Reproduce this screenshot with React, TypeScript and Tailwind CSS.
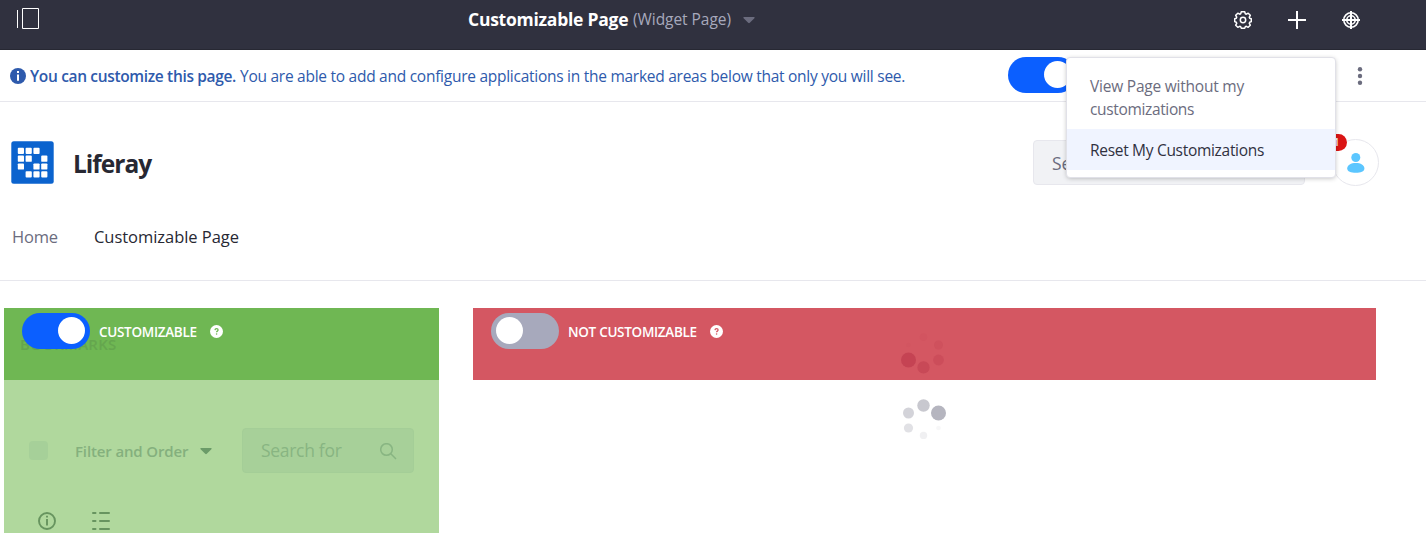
import React from 'react';

function Toggle({ on }: { on: boolean }) {
  return (
    <button
      role="switch"
      aria-checked={on}
      className={
        on
          ? 'flex h-9 w-[68px] shrink-0 items-start justify-end rounded-full bg-[#0b5fff] pt-1 pr-[5px]'
          : 'flex h-9 w-[68px] shrink-0 items-start justify-start rounded-full bg-[#a7a9bc] pt-1 pl-[5px]'
      }
    >
      <span className="size-[27px] rounded-full bg-white" />
    </button>
  );
}

function Help({ color }: { color: string }) {
  return (
    <svg width="13" height="13" viewBox="0 0 13 13" className="shrink-0">
      <circle cx="6.5" cy="6.5" r="6.5" fill="#fff" />
      <path d="M5 5.1c.1-1.9 3.1-1.9 3.1 0 0 1.1-1.5 1-1.5 2.2" fill="none" stroke={color} strokeWidth="1.3" />
      <circle cx="6.6" cy="9" r=".8" fill={color} />
    </svg>
  );
}

function Logo() {
  const cells = [[0, 0], [1, 0], [2, 0], [0, 1], [1, 1], [3, 1], [0, 2], [2, 2], [3, 2], [1, 3], [2, 3], [3, 3]];
  return (
    <svg width="43" height="43" viewBox="0 0 43 43" className="shrink-0">
      <rect x=".3" y=".3" width="42.4" height="42.4" rx="2.5" fill="#0b63ce" />
      {cells.map(([x, y]) => (
        <rect key={`${x}-${y}`} x={6.8 + x * 7.8} y={6.8 + y * 7.8} width="6.2" height="6.2" rx=".9" fill="#fff" />
      ))}
    </svg>
  );
}

function Gear() {
  return (
    <svg width="18" height="18" viewBox="0 0 18 18" fill="none" stroke="#fff">
      <path
        strokeWidth="1.5"
        strokeLinejoin="round"
        d="M7.3.8h3.4l.6 2 1 .4 1.9-1 2.1 2.1-1 1.9.4 1 1.6.6v2.8l-1.6.7-.4 1 1 1.9-2.1 2.1-1.9-1-1 .4-.6 1.5H7.3l-.6-1.5-1-.4-1.9 1-2.1-2.1 1-1.9-.4-1-1.6-.7V7.8l1.6-.6.4-1-1-1.9 2.1-2.1 1.9 1 1-.4z"
      />
      <circle cx="9" cy="9" r="2.7" strokeWidth="1.5" />
    </svg>
  );
}

function Target() {
  return (
    <svg width="18" height="18" viewBox="0 0 18 18" fill="none" stroke="#fff">
      <circle cx="9" cy="9" r="7.2" strokeWidth="1.6" />
      <circle cx="9" cy="9" r="4.2" strokeWidth="1.6" />
      <path d="M9 0v18M0 9h18" strokeWidth="2" />
    </svg>
  );
}

function Caret({ className }: { className: string }) {
  return (
    <svg width="12" height="8" viewBox="0 0 12 8" className={className} fill="currentColor">
      <path d="M1.2 1h9.6c.8 0 1.1.7.6 1.2L6.8 6.8c-.5.5-1.1.5-1.6 0L.6 2.2C.1 1.7.4 1 1.2 1z" />
    </svg>
  );
}

const redDots = [
  [22.3, 7.3, 3.7, 0.1], [37.3, 15, 4.5, 0.25], [37.3, 30, 5.4, 0.4],
  [22.3, 37.4, 6.1, 0.6], [7.3, 30, 7.5, 0.8], [7.3, 15, 2.2, 0.06],
];
const grayDots = [
  [22.3, 7.5, 6.2, 0.75], [37.3, 15, 7.5, 1], [37.3, 30, 2.3, 0.1],
  [22.3, 37.4, 3.7, 0.2], [7.3, 30, 4.6, 0.4], [7.3, 15, 5.5, 0.6],
];

function Spinner({ dots, color }: { dots: number[][]; color: string }) {
  return (
    <svg width="46" height="45" viewBox="0 0 46 45" fill={color}>
      {dots.map(([x, y, r, o]) => (
        <circle key={`${x}-${y}`} cx={x + 0.2} cy={y} r={r} opacity={o} />
      ))}
    </svg>
  );
}

export default function App() {
  return (
    <div className="h-[533px] w-full overflow-hidden bg-white font-['Open_Sans','Noto_Sans',sans-serif] text-[#272833]">
      <header className="flex h-[50px] items-start border-b border-[#272833] bg-[#30313f]">
        <div className="flex w-[468px] items-center pt-2 pl-[17px]">
          <svg width="22" height="21" viewBox="0 0 22 21" fill="none" stroke="#fff">
            <path d="M.5 2v18M5.5.5h16v20h-16z" />
          </svg>
        </div>
        <div className="flex h-[38px] flex-1 items-center whitespace-nowrap">
          <span className="w-[165px] text-[17.5px] font-bold tracking-[-0.25px] text-white">Customizable Page</span>
          <span className="w-[110px] pt-0.5 text-[15.5px] tracking-[-0.05px] text-[#a7a9bc]">(Widget Page)</span>
          <Caret className="mt-0.5 text-[#6b6c7e]" />
        </div>
        <div className="mr-[66px] flex items-center gap-9 pt-[11px]">
          <Gear />
          <svg width="18" height="18" viewBox="0 0 18 18" stroke="#fff" strokeWidth="2">
            <path d="M9 0v18M0 9h18" />
          </svg>
          <Target />
        </div>
      </header>

      <div className="relative flex h-[52px] items-start border-b border-[#e7e7ed] text-[#2e5aac]">
        <div className="flex h-[51px] w-[1008px] items-center pl-[10px] whitespace-nowrap">
          <svg width="16" height="16" viewBox="0 0 16 16" className="shrink-0">
            <circle cx="8" cy="8" r="8" fill="#2e5aac" />
            <path d="M8 3v2M8 6.5v6.3" stroke="#fff" strokeWidth="2" />
          </svg>
          <span className="ml-1 w-[210px] pt-0.5 text-[15.5px] font-semibold tracking-[-0.34px]">You can customize this page.</span>
          <span className="pt-0.5 text-[15.5px] tracking-[-0.265px]">You are able to add and configure applications in the marked areas below that only you will see.</span>
        </div>
        <div className="flex pt-[7px]">
          <Toggle on />
        </div>
        <svg width="6" height="18" viewBox="0 0 6 18" fill="#6b6c7e" className="mt-[17px] ml-[281px]">
          <circle cx="3" cy="2.2" r="2.2" />
          <circle cx="3" cy="9" r="2.2" />
          <circle cx="3" cy="15.8" r="2.2" />
        </svg>
        <div className="absolute top-[7px] left-[1066px] z-10 h-[121px] w-[270px] rounded border border-[#e1e1e8] bg-white pt-[17px] text-[15.5px] leading-[23px] whitespace-nowrap shadow-[0_1px_5px_-1px_rgba(0,0,0,0.3)]">
          <div className="h-[54px] px-[23px] text-[#6b6c7e]">
            <span className="tracking-[-0.22px]">View Page without my</span>
            <br />
            <span className="tracking-[-0.35px]">customizations</span>
          </div>
          <div className="flex h-[41px] items-center bg-[#f0f4ff] px-[23px] pt-0.5 tracking-[-0.3px] text-[#30313f]">Reset My Customizations</div>
        </div>
      </div>

      <div className="h-[179px] border-b border-[#e7e7ed]">
        <div className="flex items-center pt-[37px]">
          <div className="flex w-[1033px] items-center gap-5 pl-[11px]">
            <Logo />
            <span className="-ml-px pt-0.5 text-[24.5px] leading-9 font-bold tracking-[-1px]">Liferay</span>
          </div>
          <div className="flex h-[45px] w-[272px] items-center rounded border border-[#e7e7ed] bg-[#f1f2f5] pt-px pl-[18px] text-[17.5px] text-[#6b6c7e]">
            Se
          </div>
          <div className="relative ml-[27px] flex h-[47px] w-[47px] items-center justify-center rounded-full border border-[#e7e7ed]">
            <svg width="18" height="20" viewBox="0 0 18 20" fill="#5bc6ff">
              <circle cx="8.8" cy="4.5" r="4.500" />
              <path d="M.2 15.6C.2 12 4 10 8.800 10s8.600 2 8.600 5.600C17.400 18.600 13.600 19.800 8.800 19.800S.2 18.600.2 15.600z" />
            </svg>
            <span className="absolute top-[-6px] left-[-7px] flex h-[17px] w-[21px] items-center justify-center rounded-full bg-[#da1414] text-[10px] font-semibold text-white">1</span>
          </div>
        </div>
        <nav className="mt-[39px] flex gap-9 pl-3 text-[16.5px] leading-6 font-medium whitespace-nowrap">
          <span className="w-[46px] tracking-[-0.2px] text-[#6b6c7e]">Home</span>
          <span className="tracking-[-0.04px]">Customizable Page</span>
        </nav>
      </div>

      <main className="flex gap-[34px] pt-[27px] pl-1">
        <section className="h-[225px] w-[435px] bg-[#b0d89d]">
          <div className="relative flex h-[72px] items-start bg-[#6fb753] pt-[5px] pl-[18px]">
            <span className="absolute top-[25px] left-4 text-[15px] font-semibold tracking-[0.25px] text-[#65a64e]">BOOKMARKS</span>
            <div className="relative flex items-center">
              <Toggle on />
              <span className="ml-[9px] w-[111px] pt-0.5 text-[13.5px] font-semibold tracking-[-0.3px] text-white">CUSTOMIZABLE</span>
              <Help color="#6fb753" />
            </div>
          </div>
          <div className="mt-12 flex h-[45px] items-center whitespace-nowrap text-[#84b07d]">
            <span className="ml-[25px] size-[19px] rounded-sm bg-[#a6d099]" />
            <span className="ml-[27px] w-[125px] pt-0.5 text-[15px] font-semibold tracking-[-0.13px]">Filter and Order</span>
            <Caret className="text-[#6b9b68]" />
            <div className="ml-[30px] flex h-[45px] w-[172px] items-center rounded border border-[#a4ce97] bg-[#a7d099] pl-[18px] text-[17.5px] text-[#88b582]">
              <span className="w-[119px] tracking-[-0.3px]">Search for</span>
              <svg width="18" height="18" viewBox="0 0 18 18" fill="none" stroke="currentColor" strokeWidth="1.5" className="mt-0.5">
                <circle cx="6.5" cy="6.5" r="5.8" />
                <path d="m10.800 10.800 5.200 5.200" />
              </svg>
            </div>
          </div>
          <div className="mt-[39px] flex gap-9 pl-[34px] text-[#67945f]">
            <svg width="18" height="18" viewBox="0 0 18 18" fill="none" stroke="currentColor" strokeWidth="1.9">
              <circle cx="9" cy="9" r="8" />
              <path d="M9 3.7v1.8M9 7v6.5" />
            </svg>
            <svg width="18" height="18" viewBox="0 0 18 18" stroke="currentColor" strokeWidth="2" strokeLinecap="round">
              <path d="M1 1h2.500M8 1h9M1 9h2.500M8 9h9M1 17h2.500M8 17h9" />
            </svg>
          </div>
        </section>

        <section className="w-[903px]">
          <div className="flex h-[72px] items-start bg-[#d45762] pl-[18px]">
            <div className="flex w-[410px] items-center pt-[5px]">
              <Toggle on={false} />
              <span className="ml-[9px] w-[142px] pt-0.5 text-[13.5px] font-semibold tracking-[-0.3px] whitespace-nowrap text-white">NOT CUSTOMIZABLE</span>
              <Help color="#d45762" />
            </div>
            <div className="pt-[22px]">
              <Spinner dots={redDots} color="#c03f50" />
            </div>
          </div>
          <div className="flex pt-[18px] pl-[428px]">
            <Spinner dots={grayDots} color="#b5b5bf" />
          </div>
        </section>
      </main>
    </div>
  );
}
